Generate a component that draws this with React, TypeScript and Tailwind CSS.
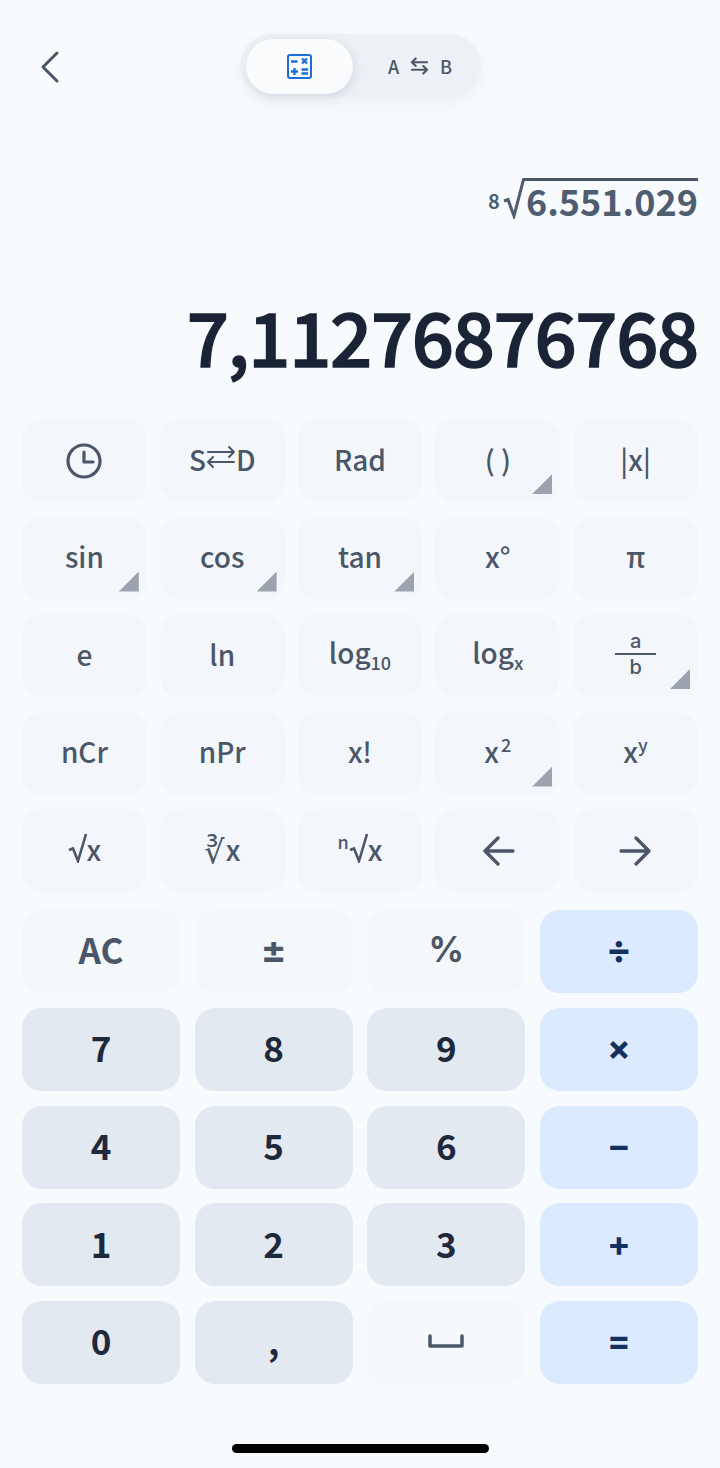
import React from "react";

const font = "font-['Noto_Sans_CJK_SC','Noto_Sans',sans-serif]";

const Corner = () => (
  <span className="absolute right-2 bottom-2 size-5 bg-[#9ca3af] [clip-path:polygon(100%_0,100%_100%,0_100%)]"></span>
);

const Sci = ({ children, corner }: { children: React.ReactNode; corner?: boolean }) => (
  <div className="relative flex h-[83px] items-center justify-center rounded-[20px] bg-[#f3f7fb] pb-[4px] text-[28px] font-medium text-[#4b5768]">
    {children}
    {corner && <Corner />}
  </div>
);

const Key = ({ children, kind }: { children: React.ReactNode; kind: "num" | "soft" | "op" }) => {
  const colors = {
    num: "bg-[#e3e9f1] text-[#1e293b]",
    soft: "bg-[#f4f8fb] text-[#4b5768]",
    op: "bg-[#dbeafe] text-[#14305f] font-['Inter',sans-serif]",
  };
  return (
    <div className={"flex h-[83px] items-center justify-center rounded-[20px] pb-[4px] text-[35px] font-bold " + colors[kind]}>
      {children}
    </div>
  );
};

const Arrow = ({ d }: { d: string }) => (
  <svg width="48" height="48" viewBox="0 0 24 24" fill="none" stroke="currentColor" strokeWidth="1.7" strokeLinecap="round" strokeLinejoin="round">
    <path d={d} />
  </svg>
);

const Radical = () => (
  <svg width="19" height="30" viewBox="0 0 19 30" fill="none" stroke="currentColor" strokeWidth="2.6" strokeLinejoin="miter" className="mt-[-2px]">
    <path d="M1 17l4-1.5L10 28 18 1" />
  </svg>
);

export default function App() {
  return (
    <div className={"flex h-[1468px] w-[720px] flex-col bg-[#f8fbfd] " + font}>
      <header className="grid grid-cols-[1fr_241px_1fr] items-center px-[22px] pt-[34px]">
        <svg className="mt-[2px] ml-[16px] text-[#4b5768]" width="26" height="36" viewBox="0 0 26 36" fill="none" stroke="currentColor" strokeWidth="3" strokeLinecap="round" strokeLinejoin="round">
          <path d="M19 4 5 18l14 14" />
        </svg>
        <div className="flex h-[64px] items-center rounded-full bg-[#edf1f6] py-[5px] pr-[5px] pl-[6px] shadow-[0_6px_16px_rgba(148,163,184,0.1)]">
          <div className="flex h-[55px] w-[107px] items-center justify-center rounded-full bg-[#f9fbfd] shadow-[2px_3px_10px_rgba(100,116,139,0.18)]">
            <svg width="25" height="25" viewBox="0 0 25 25" fill="none">
              <rect x="1" y="1" width="23" height="23" rx="2" stroke="#1c6fd6" strokeWidth="2" />
              <path d="M4 7.5h6.5M4 17.5h7M7.5 14v7M15 4.5l5 5M20 4.5l-5 5M14.5 15.5h6.5M14.5 19.5h6.5" stroke="#1c6fd6" strokeWidth="2.4" />
            </svg>
          </div>
          <div className="flex flex-1 items-center justify-center gap-[11px] pl-[12px] text-[18px] font-medium text-[#4b5768]">
            <span>A</span>
            <svg width="19" height="18" viewBox="0 0 20 18" fill="none" stroke="currentColor" strokeWidth="2.2" strokeLinecap="round" strokeLinejoin="round">
              <path d="M18 5H2M6 1 2 5l4 4M2 13h16M14 9l4 4-4 4" />
            </svg>
            <span>B</span>
          </div>
        </div>
        <div></div>
      </header>

      <div className="mt-[80px] flex items-end justify-end pr-[22px] font-semibold text-[#4f5d71]">
        <span className="mb-[8px] text-[20px] leading-none">8</span>
        <svg width="22" height="41" viewBox="0 0 22 41" fill="none" stroke="#4f5d71" strokeWidth="3" className="mr-[-1px] ml-[3px]">
          <path d="M1 23l4-1.5L11 38 20.5 1.5H22" />
        </svg>
        <span className="border-t-[3px] border-[#4b5768] pl-[2px] text-[36px] leading-[38px]">6.551.029</span>
      </div>

      <div className="mt-[66px] pr-[22px] text-right text-[74px] leading-[100px] font-medium tracking-[-1.3px] text-[#1a2436] [-webkit-text-stroke:1.4px_#1a2436]">
        7,11276876768
      </div>

      <div className="mt-[34px] grid grid-cols-5 gap-x-[13px] gap-y-[14.5px] px-[22px]">
        <Sci>
          <svg width="38" height="38" viewBox="0 0 38 38" fill="none" stroke="currentColor" strokeWidth="3.2" strokeLinecap="round" strokeLinejoin="round" className="mt-[4px]">
            <circle cx="19" cy="19" r="16" />
            <path d="M19 10v10h9" />
          </svg>
        </Sci>
        <Sci>
          <span className="flex items-center">
            S
            <svg width="30" height="26" viewBox="0 0 30 26" fill="none" stroke="currentColor" strokeWidth="2" strokeLinecap="round" strokeLinejoin="round" className="-mt-1">
              <path d="M2 8h26M23 3l5 5-5 5M28 18H2M7 13l-5 5 5 5" />
            </svg>
            D
          </span>
        </Sci>
        <Sci>Rad</Sci>
        <Sci corner>( )</Sci>
        <Sci>|x|</Sci>
        <Sci corner>sin</Sci>
        <Sci corner>cos</Sci>
        <Sci corner>tan</Sci>
        <Sci>x°</Sci>
        <Sci>π</Sci>
        <Sci>e</Sci>
        <Sci>ln</Sci>
        <Sci>
          <span>log<span className="align-[-6px] text-[18px]">10</span></span>
        </Sci>
        <Sci>
          <span>log<span className="align-[-6px] text-[18px]">x</span></span>
        </Sci>
        <Sci corner>
          <span className="flex w-[41px] flex-col items-center font-['Inter',sans-serif] text-[20px] leading-[24px]">
            <span>a</span>
            <span className="h-[2px] w-full bg-[#4b5768]"></span>
            <span>b</span>
          </span>
        </Sci>
        <Sci>nCr</Sci>
        <Sci>nPr</Sci>
        <Sci>x!</Sci>
        <Sci corner>
          <span>x<span className="ml-[2px] align-[11px] text-[18px]">2</span></span>
        </Sci>
        <Sci>
          <span>x<span className="align-[11px] text-[18px]">y</span></span>
        </Sci>
        <Sci>
          <span className="flex items-center"><Radical />x</span>
        </Sci>
        <Sci>
          <span className="flex items-center"><span className="text-[32px]">∛</span><span className="ml-[2px]">x</span></span>
        </Sci>
        <Sci>
          <span className="flex items-center"><span className="mb-[16px] text-[18px] leading-none">n</span><Radical />x</span>
        </Sci>
        <Sci><span className="mt-[4px]"><Arrow d="M19.5 12h-14M12 5.5 5.5 12l6.5 6.5" /></span></Sci>
        <Sci><span className="mt-[4px]"><Arrow d="M4.5 12h14M12 5.5l6.5 6.5-6.5 6.5" /></span></Sci>
      </div>

      <div className="mt-[18px] grid grid-cols-4 gap-x-[14.6px] gap-y-[14.75px] px-[22px]">
        <Key kind="soft">AC</Key>
        <Key kind="soft"><span className="font-['Inter',sans-serif] text-[38px]">±</span></Key>
        <Key kind="soft"><span className="font-['Inter',sans-serif]">%</span></Key>
        <Key kind="op"><span className="text-[38px]">÷</span></Key>
        <Key kind="num">7</Key>
        <Key kind="num">8</Key>
        <Key kind="num">9</Key>
        <Key kind="op">×</Key>
        <Key kind="num">4</Key>
        <Key kind="num">5</Key>
        <Key kind="num">6</Key>
        <Key kind="op">−</Key>
        <Key kind="num">1</Key>
        <Key kind="num">2</Key>
        <Key kind="num">3</Key>
        <Key kind="op">+</Key>
        <Key kind="num">0</Key>
        <Key kind="num">,</Key>
        <Key kind="soft">
          <svg width="36" height="14" viewBox="0 0 36 14" fill="none" stroke="currentColor" strokeWidth="3.5" strokeLinecap="round" strokeLinejoin="round">
            <path d="M2 2v10h32V2" />
          </svg>
        </Key>
        <Key kind="op">=</Key>
      </div>

      <div className="mt-[60px] flex justify-center">
        <div className="h-[9px] w-[257px] rounded-full bg-black"></div>
      </div>
    </div>
  );
}
